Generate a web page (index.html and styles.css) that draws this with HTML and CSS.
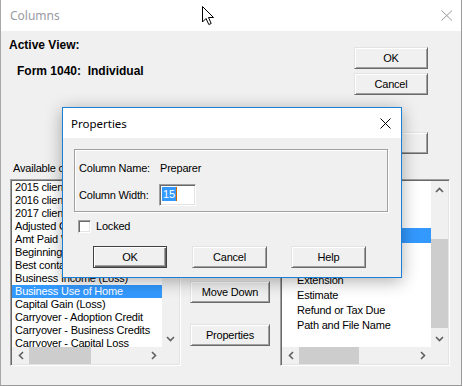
FILE: index.html
```html
<!DOCTYPE html>
<html lang="en">
<head>
    <meta charset="UTF-8">
    <title>Columns</title>
    <link rel="stylesheet" href="styles.css">
</head>
<body>
    <div class="window">
        <div class="titlebar">
            <span class="title">Columns</span>
            <svg class="close-x" width="12" height="11" viewBox="0 0 12 11"><path d="M0.5 0.5 L11 10.5 M11 0.5 L0.5 10.5" stroke="#9a9a9a" stroke-width="1" fill="none"/></svg>
        </div>
        <div class="window-body">
            <div class="top">
                <div class="view-info">
                    <p class="view-label">Active View:</p>
                    <p class="view-name">Form 1040:&nbsp;&nbsp;Individual</p>
                </div>
                <div class="actions">
                    <button class="btn">OK</button>
                    <button class="btn">Cancel</button>
                    <button class="btn btn-apart"></button>
                </div>
            </div>

            <div class="list-labels">
                <span>Available columns:</span>
            </div>

            <div class="lists">
                <!-- available columns -->
                <div class="listbox">
                    <ul class="items">
                        <li>2015 client status</li>
                        <li>2016 client status</li>
                        <li>2017 client status</li>
                        <li>Adjusted Gross Income</li>
                        <li>Amt Paid With Return</li>
                        <li>Beginning Balance</li>
                        <li>Best contact number</li>
                        <li>Business Income (Loss)</li>
                        <li class="selected">Business Use of Home</li>
                        <li>Capital Gain (Loss)</li>
                        <li>Carryover - Adoption Credit</li>
                        <li>Carryover - Business Credits</li>
                        <li>Carryover - Capital Loss</li>
                    </ul>
                    <div class="vscroll">
                        <span class="arrow"><svg width="9" height="6" viewBox="0 0 9 6"><path d="M1 5 L4.5 1.5 L8 5" stroke="#606060" stroke-width="1.6" fill="none"/></svg></span>
                        <div class="track"><div class="thumb thumb-v" style="margin-top: 0; height: 40px"></div></div>
                        <span class="arrow"><svg width="9" height="6" viewBox="0 0 9 6"><path d="M1 1 L4.5 4.5 L8 1" stroke="#606060" stroke-width="1.6" fill="none"/></svg></span>
                    </div>
                    <div class="hscroll">
                        <span class="arrow"><svg width="6" height="9" viewBox="0 0 6 9"><path d="M5 1 L1.5 4.5 L5 8" stroke="#606060" stroke-width="1.6" fill="none"/></svg></span>
                        <div class="track"><div class="thumb thumb-h" style="margin-left: 0; width: 62px"></div></div>
                        <span class="arrow"><svg width="6" height="9" viewBox="0 0 6 9"><path d="M1 1 L4.5 4.5 L1 8" stroke="#606060" stroke-width="1.6" fill="none"/></svg></span>
                    </div>
                    <div class="corner"></div>
                </div>

                <div class="mid-buttons">
                    <button class="btn btn-mid">Move Down</button>
                    <button class="btn btn-mid btn-props">Properties</button>
                </div>

                <!-- selected columns -->
                <div class="listbox listbox-right">
                    <ul class="items">
                        <li></li>
                        <li></li>
                        <li></li>
                        <li class="selected"></li>
                        <li></li>
                        <li></li>
                        <li>Extension</li>
                        <li>Estimate</li>
                        <li>Refund or Tax Due</li>
                        <li>Path and File Name</li>
                    </ul>
                    <div class="vscroll">
                        <span class="arrow"><svg width="9" height="6" viewBox="0 0 9 6"><path d="M1 5 L4.5 1.5 L8 5" stroke="#606060" stroke-width="1.6" fill="none"/></svg></span>
                        <div class="track"><div class="thumb thumb-v" style="margin-top: 41px; height: 89px"></div></div>
                        <span class="arrow"><svg width="9" height="6" viewBox="0 0 9 6"><path d="M1 1 L4.5 4.5 L8 1" stroke="#606060" stroke-width="1.6" fill="none"/></svg></span>
                    </div>
                    <div class="hscroll">
                        <span class="arrow"><svg width="6" height="9" viewBox="0 0 6 9"><path d="M5 1 L1.5 4.5 L5 8" stroke="#606060" stroke-width="1.6" fill="none"/></svg></span>
                        <div class="track"><div class="thumb thumb-h" style="margin-left: 0; width: 60px"></div></div>
                        <span class="arrow"><svg width="6" height="9" viewBox="0 0 6 9"><path d="M1 1 L4.5 4.5 L1 8" stroke="#606060" stroke-width="1.6" fill="none"/></svg></span>
                    </div>
                    <div class="corner"></div>
                </div>
            </div>
        </div>
    </div>

    <!-- Properties dialog (modal, sits over the Columns window) -->
    <div class="dialog">
        <div class="dialog-titlebar">
            <span class="dialog-title">Properties</span>
            <svg class="dialog-close" width="11" height="11" viewBox="0 0 11 11"><path d="M0.5 0.5 L10.5 10.5 M10.5 0.5 L0.5 10.5" stroke="#000" stroke-width="1" fill="none"/></svg>
        </div>
        <div class="dialog-body">
            <div class="groupbox">
                <span class="field-label">Column Name:</span>
                <span class="field-value">Preparer</span>
                <span class="field-label">Column Width:</span>
                <div class="textbox"><span class="sel">15</span><span class="caret"></span></div>
            </div>
            <label class="check-row"><span class="checkbox"></span>Locked</label>
            <div class="dialog-buttons">
                <button class="btn btn-default">OK</button>
                <button class="btn btn-wide">Cancel</button>
                <button class="btn btn-wide">Help</button>
            </div>
        </div>
    </div>

    <svg class="cursor" width="15" height="21" viewBox="0 0 15 21"><path d="M1.5 1.5 V17 L5 13.5 L7.8 19.5 L10.2 18.5 L7.5 12.5 H12.5 Z" fill="#fff" stroke="#000" stroke-width="1" stroke-linejoin="miter"/></svg>
</body>
</html>
```

FILE: styles.css
```css
* {
    margin: 0;
    padding: 0;
    box-sizing: border-box;
}

body {
    font-family: "Liberation Sans", Arial, sans-serif;
    font-size: 11px;
    letter-spacing: -0.2px;
    color: #000;
    background: #fff;
    position: relative;
    width: 463px;
    height: 386px;
    overflow: hidden;
}

/* Columns window */
.window {
    width: 462px;
    height: 386px;
    background: #f0f0f0;
    border-left: 1px solid #a8a8a8;
    border-right: 1px solid #9a9a9a;
    border-bottom: 1px solid #9a9a9a;
}

.titlebar {
    height: 31px;
    background: #fff;
    display: flex;
    align-items: center;
    justify-content: space-between;
    padding: 0 8px 0 9px;
}

.title {
    font-family: "Noto Sans", sans-serif;
    font-size: 12px;
    letter-spacing: 0;
    color: #9a9aa4;
}

.window-body {
    padding: 0 11px 0 9px;
}

.top {
    height: 124px;
    display: flex;
    justify-content: space-between;
}

.view-info p {
    font-weight: bold;
    font-size: 12px;
    letter-spacing: 0;
    line-height: 14px;
}

.view-label {
    margin: 7px 0 0 -1px;
}

.view-name {
    margin-top: 12px;
    padding-left: 7px;
}

.actions {
    margin: 16px 22px 0 0;
    display: flex;
    flex-direction: column;
    gap: 4px;
}

.btn-apart {
    margin-top: 33px;
}

/* Buttons */
.btn {
    width: 74px;
    height: 22px;
    font-family: inherit;
    font-size: 11px;
    letter-spacing: -0.2px;
    color: #000;
    background: #f0f0f0;
    border: 1px solid;
    border-color: #e3e3e3 #696969 #696969 #e3e3e3;
    box-shadow: inset 1px 1px 0 #fff, inset -1px -1px 0 #a0a0a0;
}

.list-labels {
    margin-top: 6px;
    height: 14px;
    line-height: 14px;
    padding-left: 3px;
}

/* Lists row */
.lists {
    margin-top: 4px;
    height: 187px;
    display: flex;
}

.listbox {
    width: 171px;
    height: 187px;
    background: #fff;
    border: 1px solid;
    border-color: #a0a0a0 #fff #fff #a0a0a0;
    box-shadow: inset 1px 1px 0 #696969, inset -1px -1px 0 #e3e3e3;
    padding: 1px;
    display: grid;
    grid-template-columns: 1fr 17px;
    grid-template-rows: 1fr 17px;
}

.listbox-right {
    width: 170px;
    margin-left: 10px;
}

.items {
    list-style: none;
    overflow: hidden;
    white-space: nowrap;
}

.items li {
    height: 13px;
    line-height: 13px;
    padding-left: 3px;
}

.listbox-right .items {
    padding-top: 2px;
}

.listbox-right .items li {
    height: 15px;
    line-height: 15px;
    padding-left: 15px;
}

.items li.selected {
    background: #3399ff;
    color: #fff;
}

.vscroll,
.hscroll {
    background: #f0f0f0;
    display: flex;
}

.vscroll {
    flex-direction: column;
}

.arrow {
    width: 17px;
    height: 17px;
    flex: none;
    display: flex;
    align-items: center;
    justify-content: center;
}

.track {
    flex: 1;
    display: flex;
}

.vscroll .track {
    flex-direction: column;
}

.thumb {
    background: #cdcdcd;
}

.thumb-v {
    width: 17px;
}

.thumb-h {
    height: 17px;
}

.corner {
    background: #f0f0f0;
}

.mid-buttons {
    width: 80px;
    margin-left: 9px;
    display: flex;
    flex-direction: column;
    padding-top: 102px;
}

.btn-mid {
    width: 80px;
}

.btn-props {
    margin-top: 21px;
}

/* Properties dialog */
.dialog {
    position: absolute;
    left: 62px;
    top: 107px;
    width: 340px;
    height: 171px;
    background: #f0f0f0;
    border: 1px solid #1c7fd6;
    box-shadow: 0 3px 16px rgba(0, 0, 0, 0.32);
}

.dialog-titlebar {
    height: 30px;
    background: #fff;
    display: flex;
    align-items: center;
    justify-content: space-between;
    padding: 0 10px 0 8px;
}

.dialog-title {
    font-family: "Noto Sans", sans-serif;
    font-size: 11.5px;
    letter-spacing: 0;
}

.dialog-body {
    padding: 11px 13px 0 11px;
}

.groupbox {
    height: 63px;
    border: 1px solid #a0a0a0;
    box-shadow: 1px 1px 0 #fff, inset 1px 1px 0 #fff;
    padding: 11px 0 0 4px;
    display: grid;
    grid-template-columns: 80px auto;
    grid-template-rows: 14px 22px;
    row-gap: 9px;
    align-items: center;
}

.field-value {
    padding-left: 1px;
}

.textbox {
    width: 37px;
    height: 22px;
    background: #fff;
    border: 1px solid;
    border-color: #a0a0a0 #fff #fff #a0a0a0;
    box-shadow: inset 1px 1px 0 #696969, inset -1px -1px 0 #e3e3e3;
    padding: 2px 0 0 2px;
    display: flex;
    align-items: flex-start;
}

.sel {
    background: #3399ff;
    color: #fff;
    height: 14px;
    line-height: 14px;
    padding: 0 1px;
}

.caret {
    width: 1px;
    height: 14px;
    background: #cc6600;
}

.check-row {
    display: flex;
    align-items: center;
    margin: 7px 0 0 4px;
    height: 14px;
}

.checkbox {
    width: 13px;
    height: 13px;
    background: #fff;
    border: 1px solid;
    border-color: #a0a0a0 #fff #fff #a0a0a0;
    box-shadow: inset 1px 1px 0 #696969, inset -1px -1px 0 #e3e3e3;
    margin-right: 5px;
}

.dialog-buttons {
    display: flex;
    margin: 13px 0 0 19px;
}

.btn-default {
    border-color: #404040;
    box-shadow: inset 1px 1px 0 #fff, inset -1px -1px 0 #696969, inset -2px -2px 0 #a0a0a0;
}

.btn-wide {
    width: 75px;
    margin-left: 25px;
}

.btn-wide + .btn-wide {
    margin-left: 24px;
}

.cursor {
    position: absolute;
    left: 201px;
    top: 5px;
}
```
